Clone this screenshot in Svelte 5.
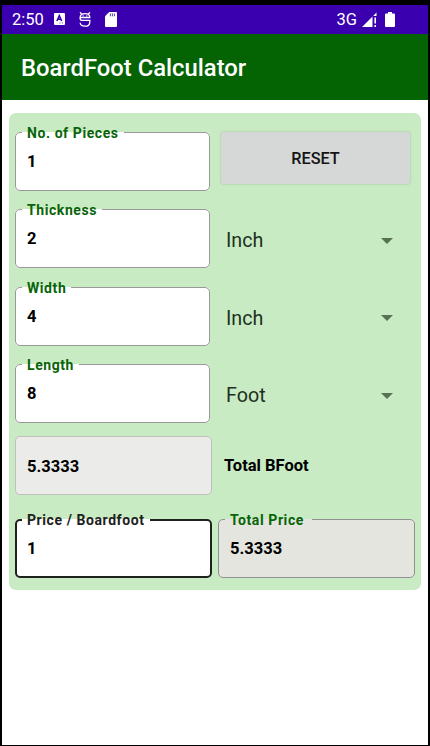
<script>
  let pieces = $state('1');
  let price = $state('1');
  let dimensions = $state([
    { label: 'Thickness', value: '2', unit: 'Inch' },
    { label: 'Width', value: '4', unit: 'Inch' },
    { label: 'Length', value: '8', unit: 'Foot' },
  ]);

  const inches = { Inch: 1, Foot: 12 };

  // one board foot is 144 cubic inches
  let boardFeet = $derived(
    dimensions.reduce((v, d) => v * Number(d.value) * inches[d.unit], Number(pieces)) / 144
  );
  let totalPrice = $derived(boardFeet * Number(price));

  function reset() {
    pieces = '';
    price = '';
    for (const d of dimensions) d.value = '';
  }
</script>

<div class="screen">
  <div class="status">
    <span class="clock">2:50</span>
    <svg class="badge" width="11" height="12" viewBox="0 0 11 12">
      <rect width="11" height="12" rx="1" fill="#fff" />
      <path d="M2.9 8 5.3 2.6 7.7 8M3.7 6.3h3.2" fill="none" stroke="#3a00b0" stroke-width="1.5" />
      <path d="M5.5 10h1M7.8 10h1" stroke="#3a00b0" stroke-width=".8" />
    </svg>
    <svg class="debug" width="12" height="15" viewBox="0 0 12 15">
      <g fill="none" stroke="#fff" stroke-width="1.3">
        <path d="M1 .3 2.6 2M11 .3 9.4 2" />
        <path d="M1.2 5.5C1.2 3 3 1.6 6 1.6s4.800 1.400 4.800 3.900z" />
        <path d="M1.2 5.500v1c0 1.200.8 1.900 2 1.900h7.600v1.500c0 2.800-1.800 4.300-4.800 4.300s-4.800-1.400-4.800-3.400" />
      </g>
      <circle cx="4.2" cy="3.9" r=".7" fill="#fff" />
      <circle cx="7.8" cy="3.9" r=".7" fill="#fff" />
    </svg>
    <svg class="card" width="12" height="15" viewBox="0 0 12 15">
      <path d="M4.2 0H11a1 1 0 0 1 1 1v13a1 1 0 0 1-1 1H1a1 1 0 0 1-1-1V4.3z" fill="#fff" />
      <path d="M5.4 1.5v2.8M7.4 1.5v2.8M9.4 1.5v2.8" stroke="#3a00b0" stroke-width=".8" />
    </svg>
    <span class="network">3G</span>
    <svg class="signal" width="15" height="15" viewBox="0 0 15 15">
      <path d="M0 15 10.5 4.5V15zM11.5 3.5 14.5.5V4h-3z" fill="#fff" />
      <path d="M13.2 5.5v6M13.2 13v2" stroke="#fff" stroke-width="1.6" />
    </svg>
    <svg class="battery" width="10" height="15" viewBox="0 0 10 15">
      <path d="M3 0h4v1.5h2a1 1 0 0 1 1 1V14a1 1 0 0 1-1 1H1a1 1 0 0 1-1-1V2.5a1 1 0 0 1 1-1h2z" fill="#fff" />
    </svg>
  </div>

  <header>BoardFoot Calculator</header>

  <main>
    <div class="row">
      <fieldset>
        <legend>No. of Pieces</legend>
        <input bind:value={pieces} aria-label="No. of Pieces" />
      </fieldset>
      <button onclick={reset}>RESET</button>
    </div>

    {#each dimensions as d}
      <div class="row">
        <fieldset>
          <legend>{d.label}</legend>
          <input bind:value={d.value} aria-label={d.label} />
        </fieldset>
        <div class="spinner">
          <span>{d.unit}</span>
          <svg width="12" height="6" viewBox="0 0 12 6"><path d="M0 0h12L6 6z" fill="#587152" /></svg>
        </div>
      </div>
    {/each}

    <div class="row total">
      <div class="result">{boardFeet.toFixed(4)}</div>
      <span class="caption">Total BFoot</span>
    </div>

    <div class="row prices">
      <fieldset class="active">
        <legend>Price / Boardfoot</legend>
        <input bind:value={price} aria-label="Price / Boardfoot" />
      </fieldset>
      <fieldset class="readonly">
        <legend>Total Price</legend>
        <output>{totalPrice.toFixed(4)}</output>
      </fieldset>
    </div>
  </main>
</div>

<style>
  :global(body) {
    background: #000;
  }

  .screen {
    box-sizing: border-box;
    height: 746px;
    border: solid #000;
    border-width: 5px 2px 1px;
    background: #fff;
    font-family: Roboto, sans-serif;
    color: #000;
  }

  .status {
    display: flex;
    align-items: center;
    height: 28.5px;
    padding: 0 33px 0 10px;
    background: #3a00b0;
    color: #fff;
    font-size: 16.5px;
  }

  .clock {
    width: 42px;
    padding-top: 1px;
  }

  .debug {
    margin-left: 14px;
  }

  .card {
    margin-left: 14px;
  }

  .network {
    margin-left: auto;
    font-size: 16.5px;
  }

  .signal {
    margin-left: 5px;
  }

  .battery {
    margin-left: 8px;
  }

  header {
    display: flex;
    align-items: center;
    height: 66.5px;
    padding: 2px 19px 0;
    box-sizing: border-box;
    background: #046404;
    color: #fff;
    font-size: 23.8px;
    font-weight: 500;
  }

  main {
    box-sizing: border-box;
    height: 477px;
    margin: 13px 7px 0;
    padding: 18.5px 6px 0;
    border-radius: 7px;
    background: #c9ebc3;
  }

  .row {
    display: grid;
    grid-template-columns: 195px 1fr;
    column-gap: 10px;
    height: 59px;
    margin-bottom: 18.6px;
  }

  .total {
    grid-template-columns: 197px 1fr;
    column-gap: 12px;
    margin: -6.2px 0 24.5px;
  }

  .prices {
    grid-template-columns: 197px 197px;
    column-gap: 6px;
    margin: 0;
  }

  fieldset {
    box-sizing: border-box;
    min-width: 0;
    height: 59px;
    margin: 0;
    padding: 0 11px 0 6px;
    border: 1px solid #999;
    border-radius: 5px;
    background: #fff;
  }

  /* collapsed to the border thickness so the label straddles the outline */
  legend {
    height: 1px;
    padding: 0 5px;
    color: #086408;
    font-size: 14px;
    font-weight: 700;
    letter-spacing: 0.58px;
    line-height: 3.5px;
    white-space: nowrap;
  }

  input,
  output {
    display: block;
    box-sizing: border-box;
    width: 100%;
    height: 57px;
    padding: 0 5px;
    border: 0;
    outline: 0;
    background: none;
    color: #000;
    font: 700 16.5px/57px Roboto, sans-serif;
  }

  .active {
    padding-left: 5px;
    border: 2px solid #1d221c;
  }

  .active legend {
    height: 2px;
    color: #1d221c;
  }

  .active input {
    height: 55px;
  }

  .readonly {
    background: #e4e5df;
    border-color: #909090;
  }

  .readonly legend {
    padding-right: 8px;
  }

  button {
    height: 52px;
    margin: 0 5px 0 1px;
    padding: 1px 0 0;
    border: 0;
    border-radius: 2px;
    background: #d6d8d7;
    box-shadow: 0 0 2px rgba(0, 0, 0, 0.25);
    color: #141414;
    font: 500 16.3px Roboto, sans-serif;
  }

  .spinner {
    display: flex;
    align-items: center;
    justify-content: space-between;
    padding: 4px 22px 0 6px;
    color: #20301e;
    font-size: 19.7px;
  }

  .result {
    box-sizing: border-box;
    height: 59px;
    padding: 1px 11px 0;
    border: 1px solid #bfc0be;
    border-radius: 5px;
    background: #ebebe9;
    font-size: 16.5px;
    font-weight: 700;
    line-height: 57px;
  }

  .caption {
    align-self: center;
    padding-top: 1px;
    font-size: 16.5px;
    font-weight: 700;
  }
</style>
